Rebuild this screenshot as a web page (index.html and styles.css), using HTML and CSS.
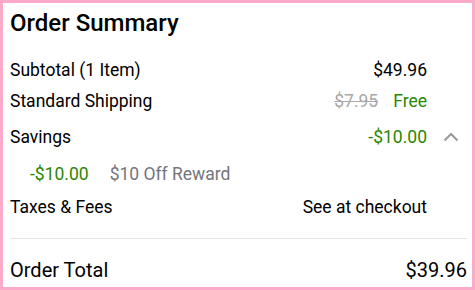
FILE: index.html
```html
<!DOCTYPE html>
<html lang="en">
<head>
  <meta charset="UTF-8">
  <meta name="viewport" content="width=device-width, initial-scale=1.0">
  <title>Order Summary</title>
  <link rel="stylesheet" href="styles.css">
</head>
<body>
  <div class="summary">
    <h2 class="title">Order Summary</h2>

    <div class="row row-first">
      <span class="label">Subtotal (1 Item)</span>
      <span class="value">$49.96</span>
    </div>

    <div class="row row-shipping">
      <span class="label">Standard Shipping</span>
      <span class="value"><s class="old-price">$7.95</s><span class="green">Free</span></span>
    </div>

    <div class="row row-savings">
      <span class="label">Savings</span>
      <span class="value green">-$10.00</span>
      <span class="toggle">
        <svg width="16" height="10" viewBox="0 0 16 10"><path d="M1.5 8.5 L8 2 L14.5 8.5" fill="none" stroke="#9a9a9a" stroke-width="2"/></svg>
      </span>
    </div>

    <div class="breakdown">
      <span class="green">-$10.00</span>
      <span class="reward">$10 Off Reward</span>
    </div>

    <div class="row row-taxes">
      <span class="label">Taxes &amp; Fees</span>
      <span class="value">See at checkout</span>
    </div>

    <hr class="divider">

    <div class="total">
      <span>Order Total</span>
      <span>$39.96</span>
    </div>
  </div>
</body>
</html>
```

FILE: styles.css
```css
body {
  margin: 0;
  padding: 0;
  background-color: #fff;
  font-family: Roboto, "Liberation Sans", Arial, sans-serif;
  color: #000;
}

.summary {
  width: 475px;
  height: 290px;
  box-sizing: border-box;
  border: 3px solid #fbaac9;
  padding: 5px 5px 0 7px;
  overflow: hidden;
}

.title {
  margin: 0;
  font-size: 24px;
  line-height: 30px;
  font-weight: 500;
}

.row {
  display: flex;
  align-items: center;
  padding-right: 40px;
  font-size: 17.5px;
  line-height: 20px;
}

.row .label {
  flex: 1;
}

.row-first {
  margin-top: 22px;
}

.row-shipping {
  margin-top: 11px;
}

.row-savings {
  margin-top: 16px;
  padding-right: 0;
}

.row-taxes {
  margin-top: 13px;
}

.toggle {
  display: flex;
  width: 40px;
  padding-left: 16px;
  box-sizing: border-box;
}

.old-price {
  color: #a9a9a9;
  margin-right: 15px;
}

.green {
  color: #2a8703;
}

.breakdown {
  display: flex;
  margin-top: 17px;
  padding-left: 20px;
  font-size: 17.5px;
  line-height: 20px;
}

.reward {
  color: #74767c;
  margin-left: 21px;
}

.divider {
  margin: 21px 0 0 0;
  border: none;
  border-top: 1px solid #e3e3e3;
}

.total {
  display: flex;
  justify-content: space-between;
  margin-top: 19px;
  font-size: 20px;
  line-height: 24px;
}
```
